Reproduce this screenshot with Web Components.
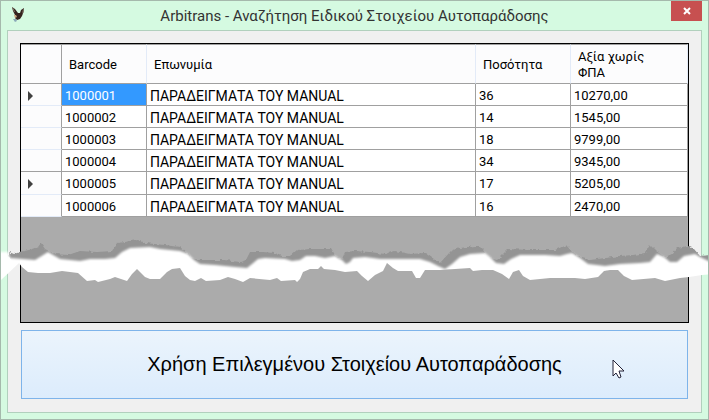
<!DOCTYPE html>
<html lang="el">
<head>
<meta charset="utf-8">
<title>Arbitrans</title>
<style>
  body {
    margin: 0;
    font-family: Roboto, "Liberation Sans", sans-serif;
    --color-frame: #d5fae1;
    --color-frame-line: #a5b9ac;
    --color-form-line: #b1d0bd;
    --color-form: #f0f0f0;
    --color-empty: #ababab;
    --color-line: #a0a0a0;
    --color-header: #fcfcfd;
    --color-header-line: #e3ebf8;
    --color-selected: #3399ff;
  }
</style>
</head>
<body>
<app-window>
  <span slot="title">Arbitrans - Αναζήτηση Ειδικού Στοιχείου Αυτοπαράδοσης</span>
  <data-grid></data-grid>
  <use-button>Χρήση Επιλεγμένου Στοιχείου Αυτοπαράδοσης</use-button>
  <torn-strip slot="overlay"></torn-strip>
</app-window>

<script>
const $windowTemplate = document.createElement("template");

$windowTemplate.innerHTML = `
  <style>
    :host {
      display: flex;
      flex-direction: column;
      position: relative;
      box-sizing: border-box;
      min-height: 100vh;
      padding: 0 6px 6px;
      border: 1px solid var(--color-frame-line);
      background-color: var(--color-frame);
      overflow: hidden;
    }

    header {
      display: grid;
      grid-template-columns: 31px 1fr 31px;
      height: 29px;
    }

    .app-icon {
      width: 16px;
      height: 18px;
      margin: 5px 0 0 4px;
    }

    h1 {
      margin: 0;
      font-size: 15px;
      font-weight: normal;
      line-height: 30px;
      text-align: center;
      white-space: nowrap;
      color: #333;
    }

    .close {
      display: flex;
      align-items: center;
      justify-content: center;
      height: 20px;
      padding: 0;
      border: 0;
      background-color: #c75050;
    }

    main {
      flex: 1;
      display: flex;
      flex-direction: column;
      gap: 7px;
      padding: 12px 12px 13px;
      border: 1px solid var(--color-form-line);
      background-color: var(--color-form);
    }
  </style>
  <header>
    <svg class="app-icon" viewBox="0 0 16 18" aria-hidden="true">
      <path d="M1 1 L4 3 L7 7 L9 7 L10 4 L13 2 L12.5 6 L11 10 L9 13 L6 14 L4 12 L4 9 L2 5 Z" fill="#35231f"/>
      <path d="M1 1 L2.5 2.5 L4 6 L3 6 Z M13 2 L12.5 6 L11.5 8 L11.5 5 Z" fill="#857868"/>
      <path d="M3 9 L5 9 L6 11 L4 12 Z" fill="#c9a27e"/>
      <path d="M2 13 L5 13 L6 15 L4 16 Z" fill="#8ba9b8"/>
    </svg>
    <h1><slot name="title"></slot></h1>
    <button class="close" type="button" aria-label="Κλείσιμο">
      <svg width="8" height="8" viewBox="0 0 8 8"><path d="M1 1 L7 7 M7 1 L1 7" stroke="#fff" stroke-width="2"/></svg>
    </button>
  </header>
  <main><slot></slot></main>
  <slot name="overlay"></slot>
`;

class AppWindow extends HTMLElement {
  constructor() {
    super();
    this.attachShadow({ mode: "open" });
    this.shadowRoot.appendChild($windowTemplate.content.cloneNode(true));
  }
}

const $gridTemplate = document.createElement("template");

$gridTemplate.innerHTML = `
  <style>
    :host {
      display: block;
      flex: 1;
      border: 1px solid #000;
      background-color: var(--color-empty);
    }

    table {
      width: 100%;
      table-layout: fixed;
      border-collapse: separate;
      border-spacing: 0;
      font-size: 13px;
      line-height: 16px;
    }

    .col-marker { width: 41px; }
    .col-barcode { width: 85px; }
    .col-quantity { width: 95px; }
    .col-value { width: 117px; }

    th, td {
      box-sizing: border-box;
      padding: 2px 3px 0;
      border-right: 1px solid var(--color-line);
      border-bottom: 1px solid var(--color-line);
      text-align: left;
      font-weight: normal;
      white-space: nowrap;
      color: #000;
    }

    td {
      background-color: #fff;
    }

    thead th {
      height: 40px;
      padding: 1px 7px 0;
      border-right-color: var(--color-header-line);
      border-top: 1px solid var(--color-line);
      background-color: var(--color-header);
      white-space: normal;
    }

    thead th:first-child {
      border-right-color: var(--color-line);
    }

    tbody th {
      padding: 2px 7px 0;
      border-bottom-color: var(--color-header-line);
      background-color: var(--color-header);
    }

    tbody tr {
      height: 22px;
    }

    tr.is-tall {
      height: 23px;
    }

    tr.is-last-before-current th {
      border-bottom-color: var(--color-line);
    }

    .name {
      font-size: 14px;
    }

    .is-selected {
      background-color: var(--color-selected);
      color: #fff;
    }

    svg {
      display: block;
    }
  </style>
  <table>
    <colgroup>
      <col class="col-marker"><col class="col-barcode"><col><col class="col-quantity"><col class="col-value">
    </colgroup>
    <thead><tr id="grid-header"></tr></thead>
    <tbody id="grid-body"></tbody>
  </table>
`;

class DataGrid extends HTMLElement {
  headers = ["", "Barcode", "Επωνυμία", "Ποσότητα", "Αξία χωρίς<br>ΦΠΑ"];

  rows = [
    { barcode: "1000001", quantity: "36", value: "10270,00", marker: true, selected: true },
    { barcode: "1000002", quantity: "14", value: "1545,00" },
    { barcode: "1000003", quantity: "18", value: "9799,00" },
    { barcode: "1000004", quantity: "34", value: "9345,00", className: "is-last-before-current" },
    { barcode: "1000005", quantity: "17", value: "5205,00", marker: true, className: "is-tall" },
    { barcode: "1000006", quantity: "16", value: "2470,00" }
  ];

  constructor() {
    super();
    this.attachShadow({ mode: "open" });
    this.shadowRoot.appendChild($gridTemplate.content.cloneNode(true));
    this.renderHeaders();
    this.renderRows();
  }

  renderHeaders() {
    this.shadowRoot.getElementById("grid-header").innerHTML =
      this.headers.map((header) => `<th scope="col">${header}</th>`).join("");
  }

  renderRows() {
    const arrow = `<svg width="5" height="10" viewBox="0 0 5 10"><path d="M0 0 L5 5 L0 10 Z" fill="#404040"/></svg>`;

    this.shadowRoot.getElementById("grid-body").innerHTML = this.rows.map((row) => `
      <tr class="${row.className || ""}">
        <th scope="row">${row.marker ? arrow : ""}</th>
        <td class="${row.selected ? "is-selected" : ""}">${row.barcode}</td>
        <td class="name">ΠΑΡΑΔΕΙΓΜΑΤΑ ΤΟΥ MANUAL</td>
        <td>${row.quantity}</td>
        <td>${row.value}</td>
      </tr>`).join("");
  }
}

const $buttonTemplate = document.createElement("template");

$buttonTemplate.innerHTML = `
  <style>
    :host {
      display: block;
      position: relative;
      margin: 0 1px;
    }

    button {
      display: block;
      width: 100%;
      height: 69px;
      padding: 0;
      border: 1px solid #7eb4ea;
      background: linear-gradient(#ebf4fc, #dcecfc);
      font-family: "Liberation Sans", sans-serif;
      font-size: 20px;
      color: #000;
    }

    .pointer {
      position: absolute;
      top: 29px;
      right: 63px;
    }
  </style>
  <button type="button"><slot></slot></button>
  <svg class="pointer" width="13" height="20" viewBox="0 0 13 20" aria-hidden="true">
    <path d="M1 1 V17 L4 14 L7 19 L9 18 L7 12 H12 Z" fill="#fff" stroke="#222238" stroke-width="1"/>
  </svg>
`;

class UseButton extends HTMLElement {
  constructor() {
    super();
    this.attachShadow({ mode: "open" });
    this.shadowRoot.appendChild($buttonTemplate.content.cloneNode(true));
  }
}

// Edges of the torn paper, as x,y pairs
const shadowEdge = "9,252 14,254 20,252 33,249 38,247 41,243 45,249 55,254 68,255 80,251 97,252 112,251 117,243 125,242 137,240 145,243 165,245 180,247 188,254 191,258 200,260 225,260 240,262 246,260 250,252 263,252 275,253 282,256 290,256 297,250 310,249 331,249 335,256 342,259 345,252 355,251 370,252 385,254 395,251 410,254 425,253 435,260 440,263 450,252 460,248 475,246 479,246 483,250 488,257 497,260 508,249 530,250 555,250 566,245 573,253 582,258 590,260 605,258 620,256 633,255 645,253 650,245 656,251 665,257 672,254 677,248 688,246 694,249 700,256 710,255";
const paperEdge = "-5,252 8,252 10,258 35,260 40,257 48,252 53,255 60,259 80,261 90,259 105,259 115,258 122,252 130,248 150,247 160,249 180,251 188,254 194,260 200,264 215,265 235,267 247,268 252,264 258,259 265,258 285,259 292,261 300,260 306,256 315,256 325,258 335,256 338,258 342,260 346,264 350,262 353,258 365,257 380,259 400,259 420,259 430,262 438,266 445,269 452,264 460,257 470,254 485,253 490,257 496,263 504,264 511,259 520,255 545,255 560,256 567,254 572,253 580,258 588,264 605,266 620,264 640,263 650,262 657,254 664,257 670,262 677,262 684,256 695,254 700,257 715,264";
const bottomEdge = "715,274 702,275 689,277 680,278 665,281 655,278 632,280 624,276 618,270 610,270 604,271 598,277 585,279 575,278 560,278 550,278 530,280 523,276 519,270 513,272 509,279 502,274 493,270 482,270 473,271 470,268 455,269 440,270 425,270 420,278 416,278 412,271 398,271 393,268 387,263 383,271 375,275 368,281 362,276 357,271 345,272 335,270 324,269 321,266 318,269 310,269 303,272 300,279 297,282 295,280 281,281 277,278 270,280 250,278 243,282 235,279 228,277 220,280 206,281 201,278 195,281 190,280 185,276 180,268 172,269 167,272 160,279 150,279 145,277 137,269 132,274 127,281 115,277 110,279 98,282 95,280 87,281 78,273 62,271 50,273 38,273 28,272 22,267 19,263 0,281 -5,286";

const $tornTemplate = document.createElement("template");

$tornTemplate.innerHTML = `
  <style>
    :host {
      display: block;
      position: absolute;
      top: 229px;
      left: -1px;
      right: -1px;
      pointer-events: none;
    }

    svg {
      display: block;
      width: 100%;
      height: 60px;
    }
  </style>
  <svg viewBox="0 230 709 60" preserveAspectRatio="none" aria-hidden="true">
    <defs>
      <filter id="rough" filterUnits="userSpaceOnUse" x="-10" y="230" width="730" height="60">
        <feTurbulence type="fractalNoise" baseFrequency="0.25" numOctaves="2" seed="4"/>
        <feDisplacementMap in="SourceGraphic" scale="4" xChannelSelector="R" yChannelSelector="G"/>
      </filter>
      <filter id="soft" filterUnits="userSpaceOnUse" x="-20" y="230" width="750" height="70">
        <feGaussianBlur stdDeviation="1"/>
      </filter>
      <clipPath id="above-tear">
        <polygon points="-5,230 715,230 ${bottomEdge}" shape-rendering="crispEdges"/>
      </clipPath>
    </defs>
    <g clip-path="url(#above-tear)">
      <polygon class="shadow" fill="#949494" filter="url(#rough)"/>
      <polygon points="-20,252 ${paperEdge} 730,264 730,295 -20,295" fill="#fff" filter="url(#soft)"/>
    </g>
  </svg>
`;

class TornStrip extends HTMLElement {
  constructor() {
    super();
    this.attachShadow({ mode: "open" });
    this.shadowRoot.appendChild($tornTemplate.content.cloneNode(true));

    // The shadow runs a little way under the paper, so no gap shows between them
    const underside = paperEdge.split(" ").slice(2).reverse().map((point) => {
      const [x, y] = point.split(",").map(Number);
      return `${x},${y + 4}`;
    });
    this.shadowRoot.querySelector(".shadow").setAttribute("points", `${shadowEdge} ${underside.join(" ")}`);
  }
}

window.customElements.define("app-window", AppWindow);
window.customElements.define("data-grid", DataGrid);
window.customElements.define("use-button", UseButton);
window.customElements.define("torn-strip", TornStrip);
</script>
</body>
</html>
